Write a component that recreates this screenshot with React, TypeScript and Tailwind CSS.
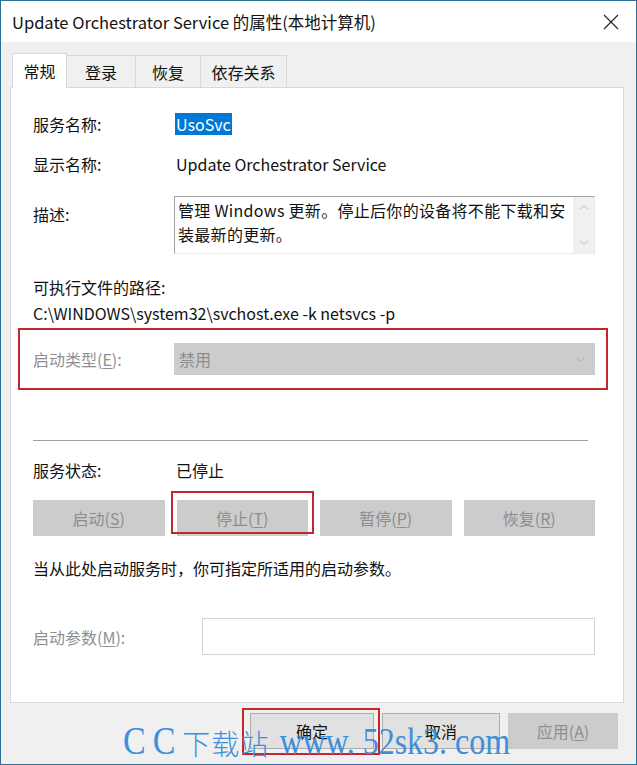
import React from "react";

const font = "font-['Noto_Sans_CJK_SC','Noto_Sans',sans-serif]";

function Key({ k }: { k: string }) {
  return <span className="underline underline-offset-2 decoration-1">{k}</span>;
}

function Chevron({ dir }: { dir: "up" | "down" }) {
  return (
    <svg width="10" height="6" viewBox="0 0 10 6" fill="none" stroke="#b4b4b4" strokeWidth="1">
      {dir === "up" ? <path d="M1 5.5 L5 1.5 L9 5.5" /> : <path d="M1 0.5 L5 4.5 L9 0.5" />}
    </svg>
  );
}

function DisabledButton({ label, k }: { label: string; k: string }) {
  return (
    <div className="h-[36px] bg-[#cccccc] flex items-center justify-center text-[#8e8e8e]">
      {label}(<Key k={k} />)
    </div>
  );
}

export default function App() {
  return (
    <div className={`relative w-[637px] h-[765px] overflow-hidden bg-[#f0f0f0] border border-[#2f6f93] text-[16px] leading-[24px] text-[#111] ${font}`}>
      {/* title bar */}
      <div className="h-[41px] bg-white flex items-center justify-between pl-[11px] pr-[17px]">
        <span className="text-[16.5px]">Update Orchestrator Service 的属性(本地计算机)</span>
        <svg width="16" height="16" viewBox="0 0 16 16" stroke="#222" strokeWidth="1.1" fill="none">
          <path d="M1 1 L15 15 M15 1 L1 15" />
        </svg>
      </div>

      <div className="pl-[9px] pr-[12px] pt-[11px]">
        {/* tabs */}
        <div className="flex items-end h-[34px] pl-[2px]">
          <div className="w-[55px] h-[35px] -mb-px relative z-10 bg-white border border-b-0 border-[#d9d9d9] flex items-center justify-center">
            常规
          </div>
          <div className="w-[69px] h-[32px] bg-[#f0f0f0] border border-l-0 border-b-0 border-[#d9d9d9] flex items-center justify-center">
            登录
          </div>
          <div className="w-[65px] h-[32px] bg-[#f0f0f0] border border-l-0 border-b-0 border-[#d9d9d9] flex items-center justify-center">
            恢复
          </div>
          <div className="w-[86px] h-[32px] bg-[#f0f0f0] border border-l-0 border-b-0 border-[#d9d9d9] flex items-center justify-center">
            依存关系
          </div>
        </div>

        {/* panel */}
        <div className="h-[616px] bg-white border border-[#d9d9d9] pl-[22px] pr-[28px] pt-[24px] flex flex-col">
          <div className="flex items-center h-[24px]">
            <span className="w-[142px]">服务名称:</span>
            <span className="bg-[#0078d7] text-white px-[1px] leading-[22px]">UsoSvc</span>
          </div>

          <div className="flex items-center h-[24px] mt-[16px]">
            <span className="w-[143px]">显示名称:</span>
            <span>Update Orchestrator Service</span>
          </div>

          <div className="flex mt-[20px] h-[58px]">
            <span className="w-[141px] pt-[6px]">描述:</span>
            <div className="flex-1 flex border-t border-l border-[#a3a3a3] border-r border-r-[#e6e6e6] border-b border-b-[#ececec] bg-white">
              <div className="flex-1 pl-[3px] pt-px whitespace-nowrap leading-[24px] tracking-[0.3px]">
                管理 Windows 更新。停止后你的设备将不能下载和安
                <br />
                装最新的更新。
              </div>
              <div className="w-[21px] bg-[#f0f0f0] flex flex-col items-center justify-between py-[7px]">
                <Chevron dir="up" />
                <Chevron dir="down" />
              </div>
            </div>
          </div>

          <div className="mt-[21px] h-[24px]">可执行文件的路径:</div>
          <div className="mt-[2px] h-[24px]">C:\WINDOWS\system32\svchost.exe -k netsvcs -p</div>

          <div className="relative flex items-center h-[32px] mt-[18px]">
            <span className="w-[141px] text-[#8f8f8f]">
              启动类型(<Key k="E" />):
            </span>
            <div className="flex-1 h-[32px] bg-[#cccccc] flex items-center justify-between pl-[5px] pr-[10px] text-[#8d8d8d]">
              <span>禁用</span>
              <svg width="9" height="5" viewBox="0 0 9 5" fill="none" stroke="#a6a6a6" strokeWidth="1">
                <path d="M0.5 0.5 L4.5 4.5 L8.5 0.5" />
              </svg>
            </div>
            <div className="absolute left-[-15px] right-[-13px] top-[-15px] bottom-[-15px] border-2 border-[#c1272d] pointer-events-none" />
          </div>

          <div className="mt-[65px] h-px bg-[#a0a0a0] mr-[7px]" />

          <div className="flex items-center h-[24px] mt-[17px]">
            <span className="w-[143px]">服务状态:</span>
            <span>已停止</span>
          </div>

          <div className="grid grid-cols-4 gap-x-[12px] mt-[18px]">
            <DisabledButton label="启动" k="S" />
            <div className="relative">
              <DisabledButton label="停止" k="T" />
              <div className="absolute left-[-6px] right-[-6px] top-[-9px] bottom-[2px] border-2 border-[#c1272d] pointer-events-none" />
            </div>
            <DisabledButton label="暂停" k="P" />
            <DisabledButton label="恢复" k="R" />
          </div>

          <div className="mt-[20px] h-[24px]">当从此处启动服务时，你可指定所适用的启动参数。</div>

          <div className="flex items-center mt-[38px] h-[37px]">
            <span className="w-[169px] text-[#8f8f8f]">
              启动参数(<Key k="M" />):
            </span>
            <div className="flex-1 h-[37px] border border-[#d4d4d4] bg-white" />
          </div>
        </div>

        {/* dialog buttons */}
        <div className="flex justify-end gap-x-[8px] mt-[10px] mr-[6px]">
          <div className="relative">
            <div className="w-[124px] h-[36px] bg-[#e1e1e1] border border-[#adadad] flex items-center justify-center">
              确定
            </div>
            <div className="absolute left-[-8px] right-[-6px] top-[-5px] bottom-[-6px] border-2 border-[#c1272d] pointer-events-none" />
          </div>
          <div className="w-[118px] h-[36px] bg-[#e1e1e1] border border-[#adadad] flex items-center justify-center">
            取消
          </div>
          <div className="w-[110px] h-[36px] bg-[#cccccc] flex items-center justify-center text-[#8e8e8e]">
            应用(<Key k="A" />)
          </div>
        </div>
      </div>

      {/* watermark */}
      <div className="absolute left-[122px] top-[726px] whitespace-nowrap text-[#3d8fdc] pointer-events-none flex items-baseline leading-none">
        <span className="font-['Liberation_Serif',serif] text-[34px] tracking-[7px] inline-block scale-y-[1.2] origin-bottom">CC</span>
        <span className="font-['Noto_Sans_CJK_SC',sans-serif] font-light text-[28px] tracking-[1px]">下载站</span>
        <span className="font-['Liberation_Serif',serif] text-[32px] ml-[10px] inline-block scale-y-[1.2] origin-bottom">
          www<span className="mr-[8px]">.</span>52sk3<span className="mr-[8px]">.</span>com
        </span>
      </div>
    </div>
  );
}
